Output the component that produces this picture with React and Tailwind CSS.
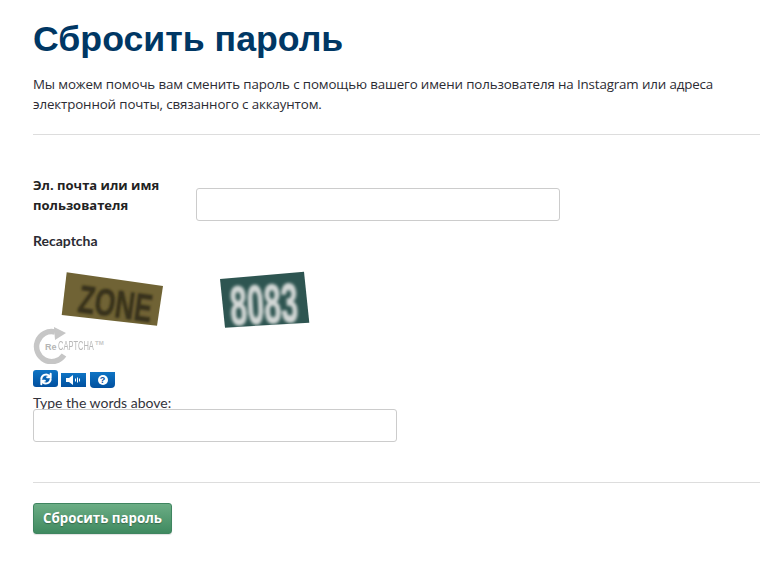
import React from "react";

function Captcha1() {
  return (
    <svg width="110" height="60" viewBox="0 0 110 60" className="block overflow-visible">
      <defs>
        <filter id="b1" x="-20%" y="-20%" width="140%" height="140%"><feGaussianBlur stdDeviation="1.2" /></filter>
        <filter id="b0"><feGaussianBlur stdDeviation="0.4" /></filter>
      </defs>
      <polygon points="7.7,2.3 104,16 98,55.7 2.7,45" fill="#6f6434" filter="url(#b0)" />
      <text x="18" y="42" transform="rotate(8 18 42)" fontFamily="Liberation Sans, sans-serif" fontWeight="700" fontSize="39" fill="#38321a" stroke="#38321a" strokeWidth="0.6" filter="url(#b1)" textLength="74" lengthAdjust="spacingAndGlyphs">ZONE</text>
    </svg>
  );
}

function Captcha2() {
  return (
    <svg width="100" height="60" viewBox="0 0 100 60" className="block overflow-visible">
      <defs>
        <filter id="b2" x="-20%" y="-20%" width="140%" height="140%"><feGaussianBlur stdDeviation="1.5" /></filter>
        <filter id="b3"><feGaussianBlur stdDeviation="0.4" /></filter>
      </defs>
      <polygon points="2,9 86,1.7 91.3,52.7 7,57.7" fill="#2f5551" filter="url(#b3)" />
      <text x="13" y="55" transform="rotate(-3 13 55)" fontFamily="Liberation Sans, sans-serif" fontWeight="700" fontSize="56" fill="#d2d7d5" stroke="#d2d7d5" strokeWidth="1.2" filter="url(#b2)" textLength="68" lengthAdjust="spacingAndGlyphs">8083</text>
    </svg>
  );
}

function RecaptchaLogo() {
  return (
    <div className="relative w-[72px] h-[37px]">
      <svg width="37" height="37" viewBox="0 0 37 37" className="absolute left-0 top-0">
        <path d="M31 28 A15 15 0 1 1 22 5" fill="none" stroke="#c6c6c6" strokeWidth="5.5" />
        <polygon points="21,0 33,6 22,13" fill="#c6c6c6" />
      </svg>
      <div className="absolute left-[12px] top-[13px] w-[60px] h-[13px] bg-white font-['Liberation_Sans',sans-serif] whitespace-nowrap">
        <span className="absolute left-0 top-[2px] text-[9px] leading-[10px] font-bold text-[#b5b5b5]">Re</span>
        <span className="absolute left-[13px] top-0 text-[12.5px] leading-[13px] text-[#b8b8b8] scale-x-[0.6] origin-left">CAPTCHA</span>
        <span className="absolute left-[50px] top-0 text-[6px] leading-[7px] font-bold text-[#c8c8c8]">TM</span>
      </div>
    </div>
  );
}

function IconBtn({ children, w = "w-[25px]", h = "h-[16px]", rounded = "rounded-[2px]", mt = "mt-0" }) {
  return (
    <div className={`${w} ${h} ${mt} ${rounded} bg-gradient-to-b from-[#0f74c4] to-[#02509f] flex items-center justify-center`}>
      {children}
    </div>
  );
}

export default function App() {
  return (
    <div className="w-[784px] h-[573px] bg-white pl-[33px] pr-[24px] pt-[17px] font-['Open_Sans',sans-serif] text-[#2b2b33] overflow-hidden">
      <h1 className="font-['Liberation_Sans',sans-serif] font-bold text-[35.7px] leading-[44px] text-[#003764]">Сбросить пароль</h1>
      <p className="mt-[13px] text-[13.33px] leading-[20px] w-[720px] tracking-[-0.13px]">
        Мы можем помочь вам сменить пароль с помощью вашего имени пользователя на Instagram или адреса электронной почты, связанного с аккаунтом.
      </p>
      <div className="mt-[20px] h-px bg-[#dddddd]" />

      <div className="mt-[40px] flex items-start">
        <label className="w-[163px] text-[13px] leading-[20px] font-bold text-[#222]">Эл. почта или имя пользователя</label>
        <div className="mt-[13px] w-[364px] h-[33px] border border-[#cccccc] rounded-[3px] bg-white" />
      </div>

      <div className="mt-[10px] font-['Lato',sans-serif] text-[14px] leading-[20px] font-bold text-[#2b2b33]">Recaptcha</div>

      <div className="mt-[19px] flex items-start h-[57px]">
        <div className="ml-[26px] w-[159px]"><Captcha1 /></div>
        <Captcha2 />
      </div>

      <RecaptchaLogo />

      <div className="mt-[6px] flex items-start">
        <IconBtn h="h-[17px]" rounded="rounded-[3px]">
          <svg width="14" height="14" viewBox="0 0 24 24" fill="none" stroke="#fff" strokeWidth="3.4" strokeLinecap="round">
            <path d="M4 12a8 8 0 0 1 13.5-5.5L20 9M20 3v6h-6" />
            <path d="M20 12a8 8 0 0 1-13.5 5.5L4 15M4 21v-6h6" />
          </svg>
        </IconBtn>
        <div className="ml-[3px]">
          <IconBtn h="h-[14px]" rounded="rounded-none" mt="mt-[3px]">
            <svg width="16" height="10" viewBox="0 0 16 10" fill="#fff">
              <polygon points="0,3 3,3 7,0 7,10 3,7 0,7" />
              <rect x="9" y="3.5" width="1" height="3" />
              <rect x="11" y="2.5" width="1" height="5" />
              <rect x="13" y="3.5" width="1" height="3" />
            </svg>
          </IconBtn>
        </div>
        <div className="ml-[4px]">
          <IconBtn rounded="rounded-b-[4px]" mt="mt-[2px]">
            <div className="w-[10px] h-[10px] rounded-full bg-white flex items-center justify-center text-[#02509f] text-[9px] leading-[10px] font-bold font-['Liberation_Sans',sans-serif]">?</div>
          </IconBtn>
        </div>
      </div>

      <div className="mt-[5px] h-[16px] font-['Lato',sans-serif] text-[14px] leading-[20px] text-[#33333b]">Type the words above:</div>
      <div className="w-[364px] h-[33px] border border-[#cccccc] rounded-[3px] bg-white relative" />

      <div className="mt-[40px] h-px bg-[#dddddd]" />

      <button className="mt-[20px] block w-[139px] h-[31px] rounded-[3px] border border-[#3f8560] bg-gradient-to-b from-[#6bad85] to-[#3f8a60] text-white text-[13.3px] font-bold shadow-[0_1px_1px_rgba(0,0,0,0.12)] [text-shadow:0_1px_1px_rgba(0,0,0,0.3)]">
        Сбросить пароль
      </button>
    </div>
  );
}
